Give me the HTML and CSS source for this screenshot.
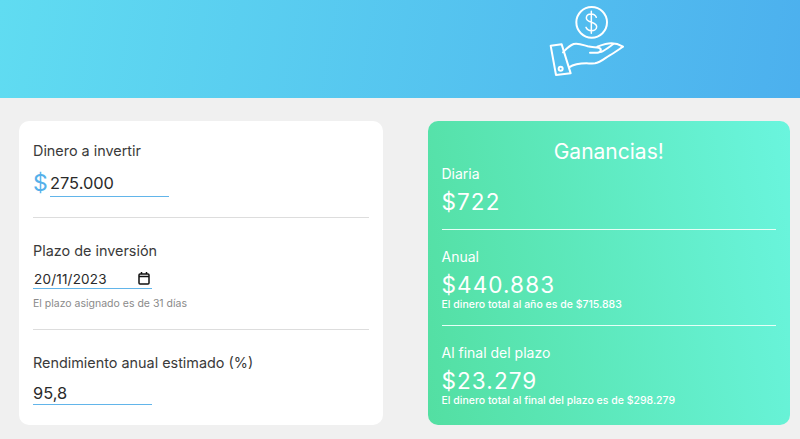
FILE: index.html
```html
<!DOCTYPE html>
<html lang="es">
<head>
    <meta charset="UTF-8">
    <title>Ganancias</title>
    <link rel="stylesheet" href="styles.css">
</head>
<body>
<header class="top">
    <svg class="top-icon" viewBox="0 0 330 255" fill="none" stroke="#fff" stroke-width="6" stroke-linejoin="round" stroke-linecap="round">
        <circle cx="185" cy="67" r="46"/>
        <path d="M199 52c-3-7-9-10-15-10-9 0-15 5-15 12 0 16 31 9 31 26 0 7-7 12-16 12-7 0-13-4-16-10M184 34v66" stroke-width="4.5"/>
        <path d="M62 137l33-4 27 87-44 5z"/>
        <circle cx="92" cy="206" r="6"/>
        <path d="M99 157c8-8 18-20 32-25 14-4 28 3 42 7 12 3 26 2 33 4 10 3 8 14-4 15h-22"/>
        <path d="M202 140c14-5 30-10 42-10 14 0 28 6 35 10-12 8-26 18-40 26-15 9-28 22-44 24-20 2-50-6-78 12"/>
        <path d="M212 156c12-4 24-14 38-24"/>
    </svg>
</header>
<main class="content">
    <section class="card form-card">
        <div class="field">
            <label class="field-label">Dinero a invertir</label>
            <div class="money-row">
                <span class="currency">$</span>
                <input class="line-input money-input" type="text" value="275.000">
            </div>
        </div>
        <div class="field">
            <label class="field-label">Plazo de inversión</label>
            <div class="date-input">
                <input class="line-input date-text" type="text" value="20/11/2023">
                <svg class="date-icon" viewBox="0 0 12 13" fill="none" stroke="#111" stroke-width="1.5">
                    <rect x="1" y="2" width="10" height="10" rx="1"/>
                    <path d="M1 4.5h10M3.5 0v2M8.5 0v2"/>
                </svg>
            </div>
            <p class="hint">El plazo asignado es de 31 días</p>
        </div>
        <div class="field">
            <label class="field-label">Rendimiento anual estimado (%)</label>
            <input class="line-input rate-input" type="text" value="95,8">
        </div>
    </section>
    <section class="card result-card">
        <h2 class="result-title">Ganancias!</h2>
        <div class="result">
            <div class="result-label">Diaria</div>
            <div class="result-value">$722</div>
        </div>
        <div class="result">
            <div class="result-label">Anual</div>
            <div class="result-value">$440.883</div>
            <div class="result-note">El dinero total al año es de $715.883</div>
        </div>
        <div class="result">
            <div class="result-label">Al final del plazo</div>
            <div class="result-value">$23.279</div>
            <div class="result-note">El dinero total al final del plazo es de $298.279</div>
        </div>
    </section>
</main>
</body>
</html>
```

FILE: styles.css
```css
*{
    margin: 0px;
    padding: 0px;
    box-sizing: border-box;
}
html, body{
    height: 100%;
    overflow: hidden;
}
body{
    font-family: "Inter", "Liberation Sans", sans-serif;
    background: #f0f0f0;
    color: #3a3a3a;
}
.top{
    height: 98px;
    background: linear-gradient(100deg, #60dcf1, #4cb0ee);
    display: flex;
    justify-content: flex-end;
    padding-right: 160px;
}
.top-icon{
    width: 110px;
    height: 85px;
}
.content{
    display: grid;
    grid-template-columns: 364px 362px;
    column-gap: 45px;
    padding: 23px 0 0 19px;
}
.card{
    height: 304px;
    border-radius: 10px;
}
.form-card{
    background: #fff;
    padding: 0 14px;
}
.field{
    height: 97px;
    padding-top: 21px;
    border-bottom: 1px solid #ddd;
}
.field:nth-child(2){
    height: 112px;
    padding-top: 24px;
}
.field:last-child{
    border-bottom: 0;
    padding-top: 24px;
}
.field-label{
    display: block;
    font-size: 14.4px;
    line-height: 18px;
    color: #3a3a3a;
}
.line-input{
    border: 0;
    border-bottom: 1px solid #62b5ea;
    outline: 0;
    background: transparent;
    font-family: inherit;
    color: #2a2a2a;
}
.money-row{
    display: flex;
    align-items: flex-end;
    margin-top: 10px;
}
.currency{
    font-size: 23px;
    line-height: 27px;
    color: #54b0ea;
    width: 17px;
}
.money-input{
    width: 119px;
    height: 27px;
    font-size: 16.4px;
}
.date-input{
    width: 119px;
    display: flex;
    align-items: center;
    margin-top: 9px;
    border-bottom: 1px solid #62b5ea;
}
.date-text{
    width: 105px;
    height: 19px;
    border: 0;
    font-size: 13.5px;
    letter-spacing: 0.2px;
    padding-left: 1px;
}
.date-icon{
    width: 12px;
    height: 13px;
}
.hint{
    font-size: 10.5px;
    line-height: 14px;
    margin-top: 8px;
    color: #8a8a8a;
}
.rate-input{
    display: block;
    width: 119px;
    height: 23px;
    margin-top: 10px;
    font-size: 16.4px;
}
.result-card{
    background: linear-gradient(80deg, #53dfa2, #6af5de);
    padding: 0 14px 0 13.5px;
    color: #fff;
}
.result-title{
    font-size: 21px;
    font-weight: 400;
    line-height: 24px;
    padding-top: 19px;
    text-align: center;
    box-sizing: content-box;
    height: 24px;
}
.result{
    height: 96px;
    border-bottom: 1px solid #e6fff6;
    padding-top: 18px;
}
.result:nth-child(2){
    height: 66px;
    padding-top: 1px;
}
.result:last-child{
    border-bottom: 0;
}
.result-label{
    font-size: 14px;
    line-height: 18px;
}
.result-value{
    font-size: 22.5px;
    line-height: 26px;
    margin-top: 6px;
    letter-spacing: 1.1px;
}
.result-note{
    font-size: 10.5px;
    font-weight: 500;
    line-height: 12px;
    margin-top: 1px;
}
```
